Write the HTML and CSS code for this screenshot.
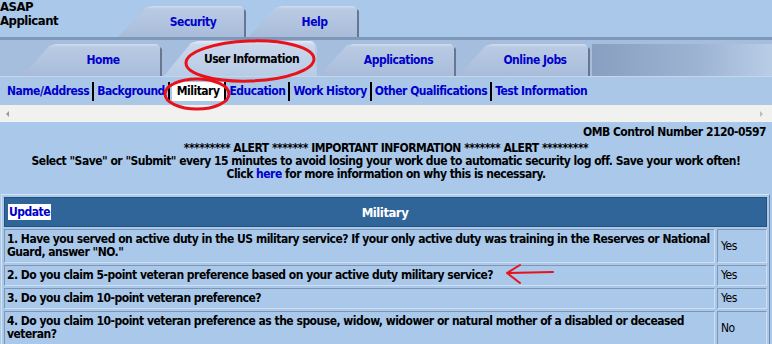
FILE: index.html
```html
<!DOCTYPE html>
<html lang="en">
<head>
    <meta charset="UTF-8">
    <title>ASAP Applicant - Military</title>
    <link rel="stylesheet" href="styles.css">
</head>
<body>
    <div class="header">
        <div class="brand">ASAP<br>Applicant</div>
        <div class="tabs tabs-top">
            <a class="tab" style="width: 128px">Security</a>
            <a class="tab" style="width: 111px">Help</a>
        </div>
    </div>

    <div class="tabs tabs-main">
        <a class="tab" style="width: 140px">Home</a>
        <a class="tab active" style="width: 153px">User Information</a>
        <a class="tab" style="width: 137px">Applications</a>
        <a class="tab" style="width: 132px">Online Jobs</a>
        <div class="tabs-fill"></div>
    </div>

    <div class="subnav">
        <a>Name/Address</a>
        <a>Background</a>
        <a class="current">Military</a>
        <a>Education</a>
        <a>Work History</a>
        <a>Other Qualifications</a>
        <a>Test Information</a>
    </div>

    <div class="scrollbar">
        <span class="arrow left"></span>
        <span class="arrow right"></span>
    </div>

    <div class="content">
        <div class="omb">OMB Control Number 2120-0597</div>
        <div class="alert">
            ********* ALERT ******* IMPORTANT INFORMATION ******* ALERT *********<br>
            Select "Save" or "Submit" every 15 minutes to avoid losing your work due to automatic security log off. Save your work often!<br>
            Click <a>here</a> for more information on why this is necessary.
        </div>

        <table class="questions">
            <tr>
                <th colspan="2">
                    <div class="th-inner">
                        <a class="update">Update</a>
                        <span class="title">Military</span>
                    </div>
                </th>
            </tr>
            <tr>
                <td>1. Have you served on active duty in the US military service? If your only active duty was training in the Reserves or National Guard, answer "NO."</td>
                <td class="answer">Yes</td>
            </tr>
            <tr>
                <td>2. Do you claim 5-point veteran preference based on your active duty military service?</td>
                <td class="answer">Yes</td>
            </tr>
            <tr>
                <td>3. Do you claim 10-point veteran preference?</td>
                <td class="answer">Yes</td>
            </tr>
            <tr>
                <td>4. Do you claim 10-point veteran preference as the spouse, widow, widower or natural mother of a disabled or deceased veteran?</td>
                <td class="answer">No</td>
            </tr>
        </table>
    </div>

    <!-- red markup drawn over the screenshot -->
    <svg class="marks" width="772" height="344" viewBox="0 0 772 344">
        <ellipse cx="250" cy="61" rx="64" ry="20" transform="rotate(-2 250 61)" />
        <ellipse cx="197" cy="94" rx="32" ry="15" />
        <path d="M507 273 L553 272 M507 273 L520 265 M507 273 L520 283" />
    </svg>
</body>
</html>
```

FILE: styles.css
```css
* {
    margin: 0;
    padding: 0;
    box-sizing: border-box;
}

body {
    font-family: Tahoma, 'DejaVu Sans Condensed', 'DejaVu Sans', sans-serif;
    font-size: 12px;
    font-weight: bold;
    letter-spacing: -0.5px;
    background: #a9c8ea;
    color: #000;
    width: 772px;
    height: 344px;
    overflow: hidden;
    position: relative;
}

a {
    color: #0000cc;
    text-decoration: none;
}

.header {
    display: flex;
    align-items: flex-end;
    height: 40px;
    border-bottom: 3px solid #7f97b8;
}

.brand {
    width: 118px;
    align-self: flex-start;
    font-size: 13px;
    line-height: 14px;
}

.tabs {
    display: flex;
    align-items: flex-end;
    gap: 2px;
}

.tab {
    height: 31px;
    display: flex;
    align-items: center;
    justify-content: center;
    padding-left: 24px;
    background: linear-gradient(#d2def0 0, #b9cae3 3px, #a8bcda 100%);
    border-right: 2px solid #66778f;
    clip-path: polygon(0 100%, 22px 8px, 27px 2px, 34px 0, calc(100% - 5px) 0, 100% 5px, 100% 100%);
}

.tabs-top {
    height: 37px;
}

.tabs-main {
    height: 36px;
    padding-left: 22px;
    background: #a6bedd;
}

.tabs-main .tab {
    height: 32px;
}

.tabs-main .tab.active {
    height: 35px;
    color: #000;
    background: linear-gradient(#e3ebf6 0, #c9d7ec 4px, #b8cbe6 100%);
    border-right: 2px solid #b8cbe6;
}

.tabs-fill {
    flex: 1;
    align-self: stretch;
    margin-top: 4px;
    background: linear-gradient(90deg, #889fc1 0%, #9db4d3 60%, #b9cde7 100%);
}

.subnav {
    display: flex;
    align-items: center;
    height: 29px;
    padding-left: 4px;
    background: #abc7e8;
    border-top: 1px solid #c6d7ec;
}

.subnav a {
    padding: 0 3px;
    line-height: 19px;
    border-right: 2px solid #000;
}

.subnav a:last-child {
    border-right: none;
}

.subnav a.current {
    background: #fff;
    color: #000;
    padding: 0 5px;
    margin-left: 2px;
}

.scrollbar {
    height: 17px;
    background: #f1f1f0;
    display: flex;
    justify-content: space-between;
    align-items: center;
    padding: 0 9px 0 6px;
}

.arrow {
    width: 0;
    height: 0;
    border-top: 3px solid transparent;
    border-bottom: 3px solid transparent;
}

.arrow.left {
    border-right: 3px solid #999;
}

.arrow.right {
    border-left: 3px solid #bbb;
}

.content {
    padding-top: 2px;
}

.omb {
    text-align: right;
    padding-right: 6px;
    line-height: 16px;
    margin-bottom: 2px;
}

.alert {
    text-align: center;
    line-height: 13px;
}

.questions {
    margin: 13px 0 0 1px;
    width: 769px;
    border: 1px solid #d7e3f1;
    border-right-color: #6f88aa;
    border-bottom-color: #6f88aa;
    border-spacing: 2px;
}

.questions th {
    background: #30659a;
    color: #fff;
    height: 30px;
    padding: 0 3px;
    border: 1px solid #24527f;
}

.th-inner {
    display: flex;
    align-items: center;
}

.update {
    background: #fff;
    color: #0000cc;
    padding: 1px 1px;
}

.title {
    flex: 1;
    text-align: center;
    font-size: 13px;
    padding-right: 44px;
}

.questions td {
    padding: 3px 2px;
    line-height: 13px;
    border: 1px solid #7d96b6;
    border-right-color: #d2dff0;
    border-bottom-color: #d2dff0;
    vertical-align: middle;
}

.questions td.answer {
    width: 50px;
    font-weight: normal;
    padding-left: 3px;
}

.marks {
    position: absolute;
    left: 0;
    top: 0;
    pointer-events: none;
}

.marks ellipse,
.marks path {
    fill: none;
    stroke: #e8121a;
    stroke-width: 3;
    stroke-linecap: round;
}

.marks path {
    stroke-width: 2;
}
```
